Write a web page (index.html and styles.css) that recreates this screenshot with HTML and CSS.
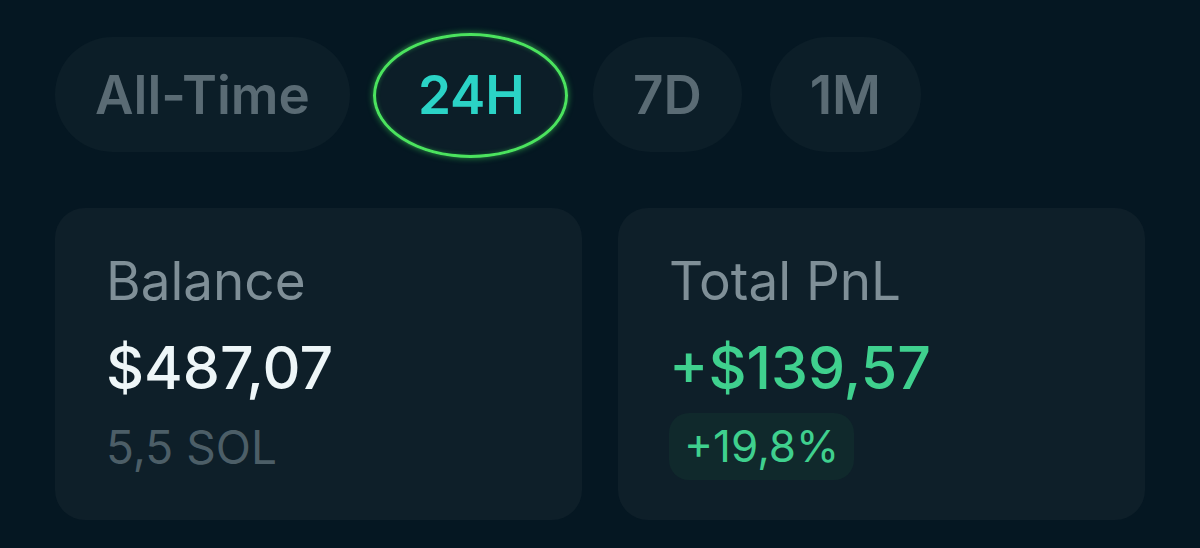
FILE: index.html
```html
<!DOCTYPE html>
<html lang="en">
<head>
    <meta charset="UTF-8">
    <meta name="viewport" content="width=device-width, initial-scale=1.0">
    <title>Portfolio</title>
    <link rel="stylesheet" href="styles.css">
</head>
<body>
    <div id="portfolio">
        <div class="tabs">
            <div class="tab">All-Time</div>
            <div class="tab active">24H<span class="ring"></span></div>
            <div class="tab">7D</div>
            <div class="tab">1M</div>
        </div>

        <div class="cards">
            <div class="card">
                <p class="label">Balance</p>
                <p class="value">$487,07</p>
                <p class="sub">5,5 SOL</p>
            </div>
            <div class="card">
                <p class="label">Total PnL</p>
                <p class="value green">+$139,57</p>
                <span class="badge">+19,8%</span>
            </div>
        </div>
    </div>
</body>
</html>
```

FILE: styles.css
```css
body {
    font-family: Inter, "Noto Sans", sans-serif;
    background-color: #051722;
    margin: 0;
    height: 100vh;
}

#portfolio {
    padding: 37px 55px 0 55px;
}

.tabs {
    display: flex;
    gap: 28px;
}

.tab {
    position: relative;
    height: 115px;
    padding: 0 40px;
    border-radius: 58px;
    background-color: #0c1e28;
    color: #5a6b74;
    font-size: 53px;
    font-weight: 600;
    display: flex;
    align-items: center;
}

.tab.active {
    color: #2bd3c6;
}

.ring {
    position: absolute;
    top: -4px;
    bottom: -6px;
    left: -5px;
    right: -3px;
    border: 3px solid #4be35e;
    border-radius: 50%;
    box-shadow: 0 0 6px rgba(60, 230, 90, 0.6), inset 0 0 4px rgba(60, 230, 90, 0.4);
}

.cards {
    display: flex;
    gap: 36px;
    margin-top: 56px;
}

.card {
    width: 527px;
    height: 312px;
    box-sizing: border-box;
    padding: 40px 51px;
    background-color: #0e1f29;
    border-radius: 30px;
}

.card p {
    margin: 0;
}

.label {
    color: #7f8f97;
    font-size: 53px;
    line-height: 66px;
}

.value {
    margin-top: 14px !important;
    color: #eef6f8;
    font-size: 59px;
    font-weight: 500;
    line-height: 80px;
}

.value.green {
    color: #3fd08e;
}

.sub {
    margin-top: 7px !important;
    color: #4c5e67;
    font-size: 46px;
    line-height: 64px;
}

.badge {
    display: inline-block;
    margin-top: 5px;
    padding: 0 15px;
    height: 67px;
    line-height: 67px;
    border-radius: 20px;
    background-color: #10292c;
    color: #3fd08e;
    font-size: 44px;
}
```
